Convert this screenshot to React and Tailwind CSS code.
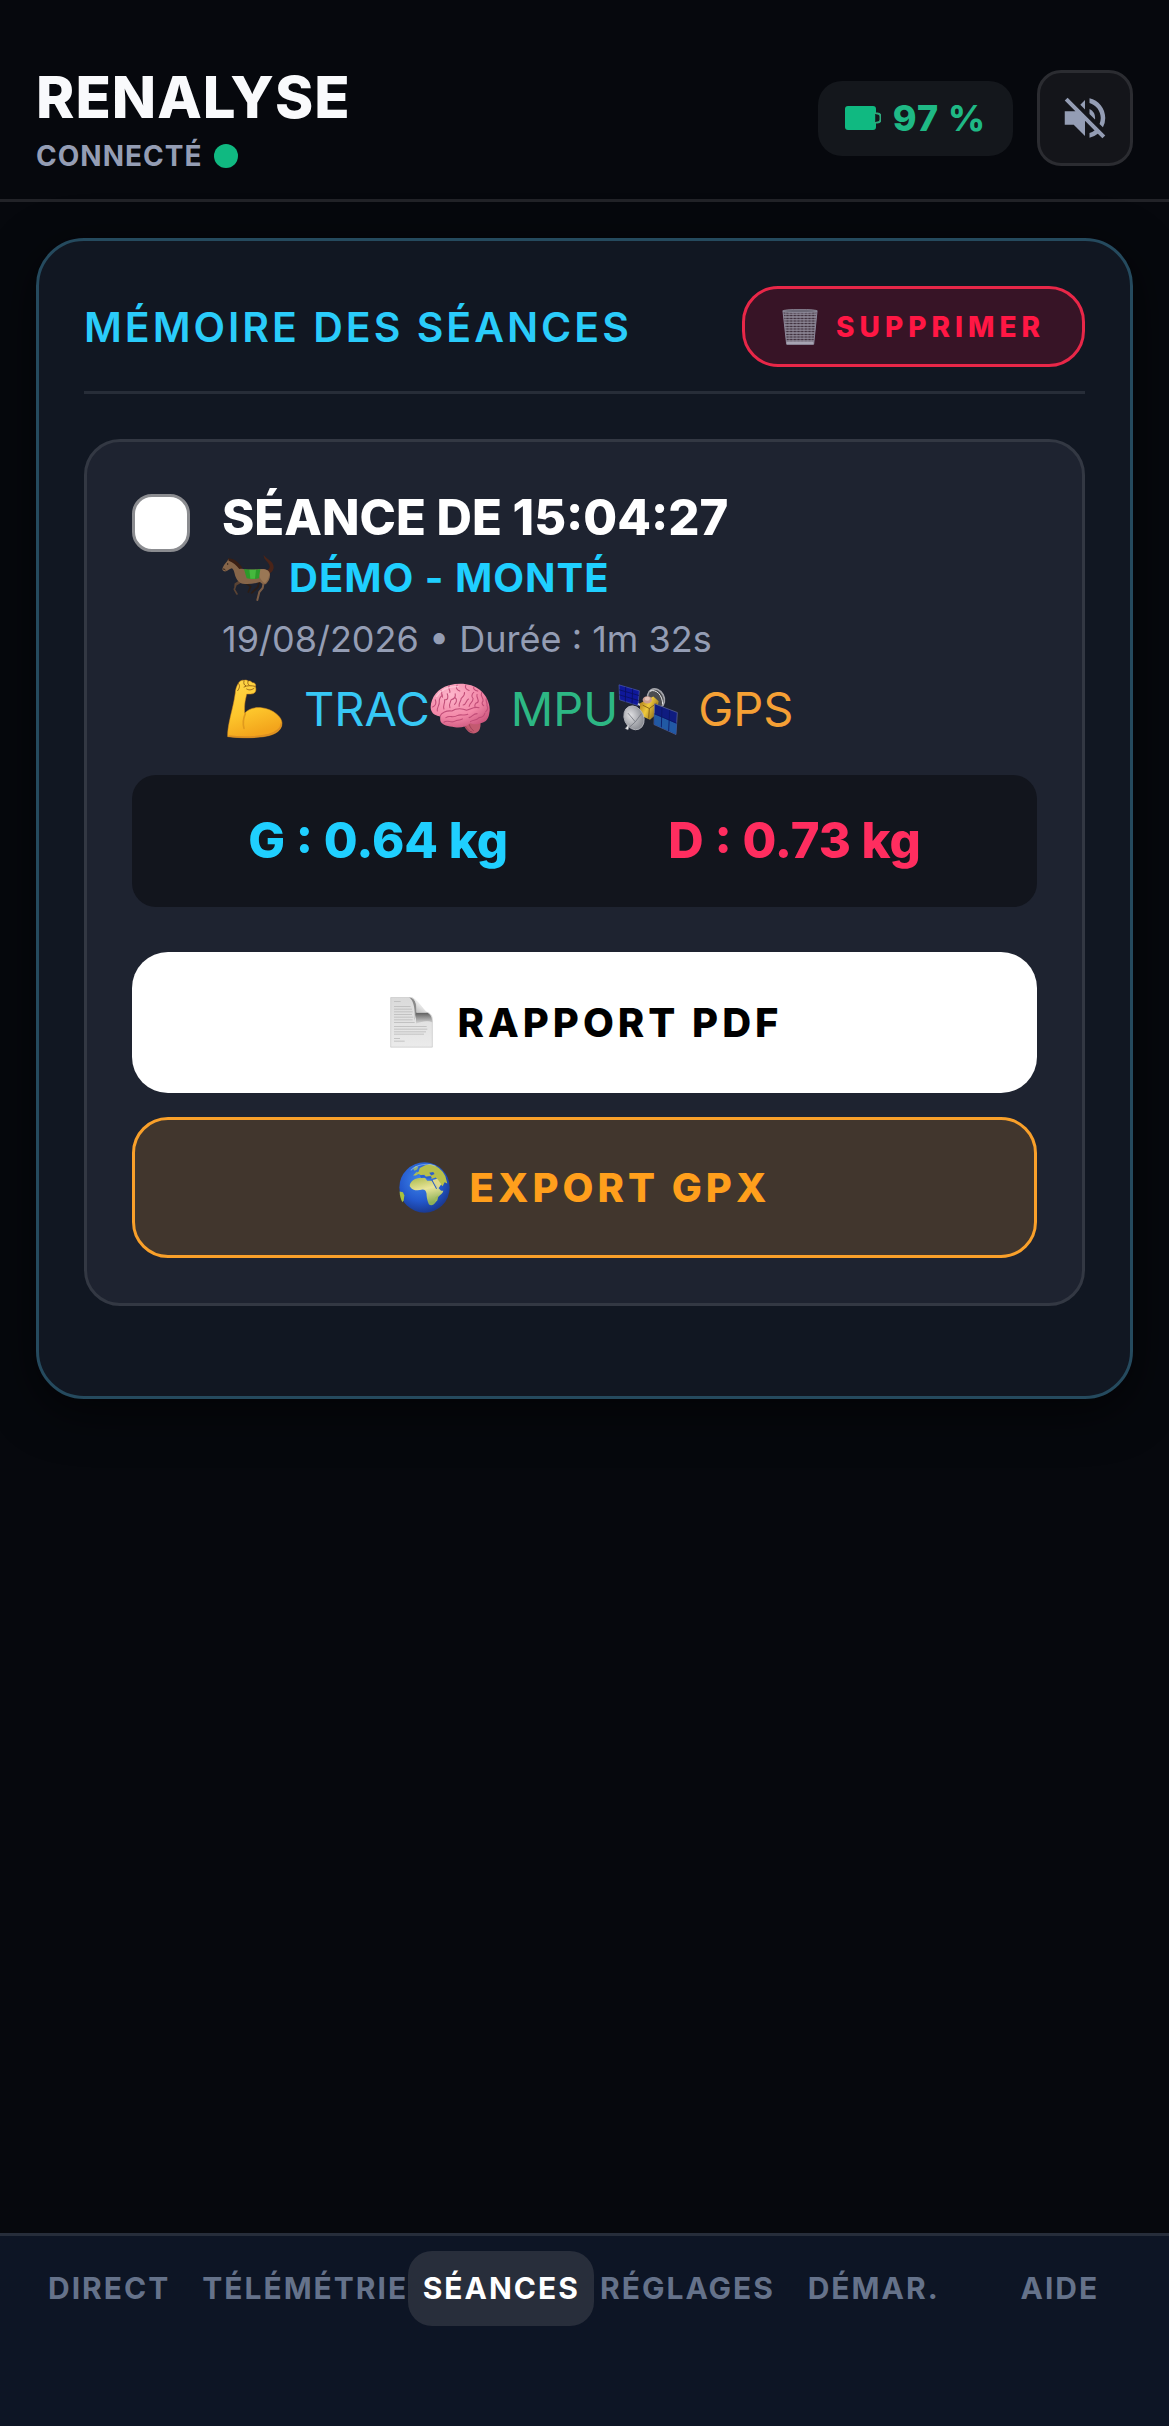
import { useState } from 'react';
import { MdVolumeOff } from 'react-icons/md';

function BatteryIcon() {
  return (
    <svg viewBox="0 0 36 24" className="w-9 h-6 shrink-0" fill="#10b981" aria-hidden="true">
      <rect x="0" y="0" width="31" height="24" rx="3" />
      <path d="M29 7.5h3.5a3 3 0 0 1 3 3v3a3 3 0 0 1-3 3H29" fill="none" stroke="#2fa97d" strokeWidth="2" />
      <path d="M30.8 8v8" stroke="#14181d" strokeWidth="1.2" />
    </svg>
  );
}

function TrashIcon() {
  return (
    <svg viewBox="0 0 108 108" className="w-9 h-9 shrink-0" aria-hidden="true">
      <defs>
        <pattern id="mesh" width="11" height="8" patternUnits="userSpaceOnUse">
          <rect width="11" height="8" fill="#8b8594" />
          <ellipse cx="5.5" cy="4" rx="3.6" ry="2.2" fill="#33222f" />
          <path d="M0 2.2 2 4 0 5.8zM11 2.2 9 4l2 1.8z" fill="#33222f" />
        </pattern>
      </defs>
      <path d="M3 7h102l-10 99H14z" fill="url(#mesh)" stroke="#8b8799" strokeWidth="3" />
      <ellipse cx="54" cy="6" rx="52" ry="5" fill="#6c6876" stroke="#9a98a8" strokeWidth="2" />
      <path d="M14 98h81l-1 8H15z" fill="#a7a4b3" />
    </svg>
  );
}

function HorseIcon() {
  return (
    <svg viewBox="0 0 156 142" className="w-[52px] h-12 shrink-0" aria-hidden="true">
      <g fill="none" strokeLinecap="round" strokeLinejoin="round">
        <path d="M62 80 42 91l-5 14 8 14M54 80l-14 9-1 12" stroke="#5a4333" strokeWidth="5" />
        <path d="M68 84 86 97l-7 16M112 80l-4 18-19 18" stroke="#2c1d15" strokeWidth="5" />
        <path d="m126 80-4 21-10 12-6 24" stroke="#7a5c46" strokeWidth="6" />
      </g>
      <path d="M122 50c18-2 24-8 20-18-4-12-18-16-17-31 6 11 18 14 26 25 9 14 2 30-16 34z" fill="#4a2418" />
      <path d="M1 44c1-7 8-16 15-24l3-7 5 5c12 2 22 12 32 24 10 5 28 4 52 3 22-3 34 2 36 14 1 12-4 22-12 30-6 2-12 0-18-6-16 5-34 7-52 5C48 84 41 72 38 58c-2-8-4-13-8-16-6 1-11 6-18 9-6 1-11-2-11-7z" fill="#866549" />
      <path d="M108 46c20-4 34 2 34 14-1 10-6 20-13 27-10-6-20-20-21-41z" fill="#9a7755" />
      <path d="M18 12c18 0 32 12 44 30l-10 2C42 32 34 24 20 19z" fill="#3a1f14" />
      <path d="M66 44c14 3 32 3 49 0l-4 28c-12 3-26 3-37 0z" fill="#2c9a2a" />
      <path d="M82 46h20l-3 27H85z" fill="#45b83d" />
      <circle cx="17" cy="29" r="2" fill="#1b120d" />
      <path d="M3 44c3 0 6 1 8 4" stroke="#2b1a12" strokeWidth="3" fill="none" />
    </svg>
  );
}

function MuscleIcon() {
  return (
    <svg viewBox="-12 0 186 180" className="w-[62px] h-[60px] shrink-0" aria-hidden="true">
      <defs>
        <linearGradient id="arm" x1="0" y1="0" x2="0.3" y2="1">
          <stop offset="0" stopColor="#ffd84a" />
          <stop offset="0.6" stopColor="#fdc62c" />
          <stop offset="1" stopColor="#f3a51c" />
        </linearGradient>
      </defs>
      <path d="M5 173C4 150 12 118 20 84c4-16 6-30 8-42 0-10 4-20 9-29 4-7 11-11 17-9 5-2 10 0 12 2 6-1 10 1 13 5 7-1 12 5 9 12 3 6 2 16-3 19-6 4-15 3-23 3-2 12-8 26-6 58 8-11 26-19 50-17 36 4 62 28 62 46 0 22-18 34-48 40-30 5-72 6-115 1z" fill="url(#arm)" stroke="#d98d1a" strokeWidth="1.5" />
      <path d="M58 104c-6 14-8 30-4 44" stroke="#e09a1d" strokeWidth="5" fill="none" strokeLinecap="round" />
      <path d="M37 13c6 6 4 14-2 22M54 6c-2 8 0 12 5 14M66 7c-2 6 0 10 4 12M54 24c10-6 24-4 33-2M62 30c6 4 14 4 22-2" stroke="#8f5a12" strokeWidth="2.6" fill="none" strokeLinecap="round" />
      <path d="M8 171c38 5 90 4 120-4 24-7 38-20 38-34" stroke="#dd8f22" strokeWidth="5" fill="none" />
    </svg>
  );
}

function BrainIcon() {
  return (
    <svg viewBox="0 0 184 156" className="w-[61px] h-[52px] shrink-0" aria-hidden="true">
      <defs>
        <radialGradient id="brain" cx="0.35" cy="0.25" r="0.85">
          <stop offset="0" stopColor="#fdb6cb" />
          <stop offset="0.6" stopColor="#f388a8" />
          <stop offset="1" stopColor="#c9527a" />
        </radialGradient>
      </defs>
      <path d="M98 118c8 20 18 34 34 34 16-2 22-16 20-34z" fill="#c35a70" />
      <path d="M104 124c6 14 14 22 24 24M118 124c4 10 8 16 14 20" stroke="#963f55" strokeWidth="2.5" fill="none" />
      <path d="M2 72C3 42 24 14 58 6c36-9 72-3 92 14 22 17 34 48 29 70-2 16-10 28-24 30-12 6-26 4-34 1-12 11-28 14-46 12-20-2-38-6-43-17-2-6-1-12-1-16C12 98 2 88 2 72z" fill="url(#brain)" />
      <g stroke="#c14d78" strokeWidth="3.2" fill="none" strokeLinecap="round" strokeLinejoin="round">
        <path d="M30 100c4-12 20-18 36-16 14-10 34-8 44-2 14-4 22-12 38-8" />
        <path d="M8 72c8-4 12-12 8-22M22 84c-2-12 8-16 6-30 0-8 4-14 10-18M34 22c4 8-2 12 4 20" />
        <path d="M42 78c-4-12 4-16 2-28 10 2 12-8 8-18M58 8c-6 8 4 12 2 20" />
        <path d="M60 74c-4-10 2-18 4-24 8-2 14-8 12-18M76 44c8 6 2 16-2 20M82 6c-6 8 0 16 8 18" />
        <path d="M88 70c-2-12 6-14 6-24 6-6 12-10 10-18M100 66c10 0 8-14 16-18M108 6c-4 8 2 14 10 16" />
        <path d="M118 70c2-12 12-12 12-24-6-4-4-14 2-18M132 12c-2 6 4 10 12 12M142 34c-4 10 8 14 2 24-8 2-10 8-8 14" />
        <path d="M156 28c-6 12 6 14 4 26-4 4-4 10 2 14M170 46c-4 8 4 12 2 22 4 6 2 14-4 18" />
        <path d="M48 104c12-8 22 2 34-6 12-6 20 2 32-4M42 118c10-8 20 2 30-2 14-8 20-2 26-8M118 104c10-2 12-12 24-12M122 116c8-6 18-2 26-12 8 0 16-6 18-14" />
      </g>
      <path d="M20 40C32 20 56 10 84 10" stroke="#ffd3df" strokeWidth="5" fill="none" strokeLinecap="round" opacity="0.7" />
    </svg>
  );
}

function SatelliteIcon() {
  return (
    <svg viewBox="0 0 180 158" className="w-[60px] h-[53px] shrink-0" aria-hidden="true">
      <defs>
        <linearGradient id="gold" x1="0" y1="0" x2="1" y2="0.6">
          <stop offset="0" stopColor="#9c6b16" />
          <stop offset="0.5" stopColor="#f0c93c" />
          <stop offset="1" stopColor="#8a6a1c" />
        </linearGradient>
        <radialGradient id="dish" cx="0.4" cy="0.35" r="0.8">
          <stop offset="0" stopColor="#e0e0e3" />
          <stop offset="1" stopColor="#74777f" />
        </radialGradient>
      </defs>
      <ellipse cx="114" cy="46" rx="24" ry="30" fill="#4c4d50" stroke="#a3a4aa" strokeWidth="5" transform="rotate(-28 114 46)" />
      <path d="M96 24c18-8 38 12 38 40" stroke="#e8e8ea" strokeWidth="3" fill="none" />
      <path d="M3 5l61 18-4 44L5 50z" fill="#0f189a" stroke="#4f5cae" strokeWidth="2" />
      <path d="M23 11l-1 45M44 17l-2 45M4 20l59 17M4 35l58 17" stroke="#0a1060" strokeWidth="2.5" />
      <path d="M60 62l16 8" stroke="#c9c9cc" strokeWidth="6" />
      <path d="M66 60l40-20 16 14-8 40-18 16-30-14z" fill="url(#gold)" />
      <path d="M74 66l20 10-2 30M94 76l22-16" stroke="#7b5512" strokeWidth="2.5" fill="none" />
      <ellipse cx="88" cy="50" rx="14" ry="11" fill="#c99c90" />
      <ellipse cx="88" cy="47" rx="8" ry="6" fill="#e3c3b8" />
      <path d="M110 62l68 26-4 66-66-30z" fill="#0f1c80" stroke="#6670a0" strokeWidth="2" />
      <path d="M109 92l67 30-2 31-65-29z" fill="#2159a4" />
      <path d="M132 71l-2 61M155 80l-3 64M109 92l67 28" stroke="#0b1664" strokeWidth="2.5" />
      <ellipse cx="48" cy="104" rx="29" ry="37" fill="url(#dish)" stroke="#b4b5bb" strokeWidth="2.5" transform="rotate(-24 48 104)" />
      <path d="M30 90l22 26 18-24M52 116l-22 20" stroke="#74777f" strokeWidth="2.5" fill="none" />
      <path d="M34 122l-12 14 8 4z" fill="#eeeeef" stroke="#9a9ca3" strokeWidth="2" />
    </svg>
  );
}

function PageIcon() {
  return (
    <svg viewBox="-12 0 153 152" className="w-[51px] h-[51px] shrink-0" aria-hidden="true">
      <defs>
        <linearGradient id="sheet" x1="0" y1="0" x2="0" y2="1">
          <stop offset="0" stopColor="#dadada" />
          <stop offset="1" stopColor="#ebebeb" />
        </linearGradient>
        <linearGradient id="fold" x1="0.1" y1="1" x2="0.6" y2="0.3">
          <stop offset="0" stopColor="#b5b5b5" />
          <stop offset="1" stopColor="#f6f6f6" />
        </linearGradient>
        <linearGradient id="shade" x1="0" y1="0" x2="0" y2="1">
          <stop offset="0" stopColor="#5c5c5c" />
          <stop offset="1" stopColor="#dcdcdc" />
        </linearGradient>
      </defs>
      <path d="M2 1h58c14 2 20 10 20 26v18h26c14 0 21 10 21 24v81H2z" fill="url(#sheet)" stroke="#c6c6c6" strokeWidth="2" />
      <path d="M12 13h20M12 28h50M12 36h54M12 44h56M12 52h54M12 60h58M12 68h56M12 76h62M12 88h98M12 96h100M12 104h96M12 111h90M12 124h18M12 132h32" stroke="#bababa" strokeWidth="2.4" />
      <path d="M78 46h30c12 2 18 12 19 30-10-6-30-6-49 4z" fill="url(#shade)" />
      <path d="M58 1c16 2 22 12 22 44l-6 24c2-30-2-58-16-68z" fill="#6e6e6e" opacity="0.75" />
      <path d="M64 1c10 2 18 12 46 45H80C80 26 79 8 64 1z" fill="url(#fold)" stroke="#d5d5d5" strokeWidth="1" />
    </svg>
  );
}

function GlobeIcon() {
  return (
    <svg viewBox="0 0 152 152" className="w-[51px] h-[51px] shrink-0" aria-hidden="true">
      <defs>
        <radialGradient id="sea" cx="0.42" cy="0.35" r="0.65">
          <stop offset="0" stopColor="#3f86ea" />
          <stop offset="0.65" stopColor="#2358cc" />
          <stop offset="1" stopColor="#1a3a92" />
        </radialGradient>
        <linearGradient id="land" x1="0" y1="0" x2="0.3" y2="1">
          <stop offset="0" stopColor="#a9b84a" />
          <stop offset="0.5" stopColor="#e9e59a" />
          <stop offset="1" stopColor="#8fb158" />
        </linearGradient>
      </defs>
      <circle cx="76" cy="76" r="75" fill="url(#sea)" />
      <path d="M32 72c0-10 8-18 18-22 10-4 20-4 28-2l6 8 18 0 8 14 12 12c2 4 6 4 10 4-2 10-12 14-16 20-2 10-6 14-12 20-6 4-14 4-16-2-4-10-6-20-6-30-2-8-4-12-12-12-14 4-30 4-38-10z" fill="url(#land)" />
      <path d="M42 40l8-8 8-2 4-12 16-8 14-4c20 4 38 18 46 36l6 22-8-4-6 12-8-8-12-18-12 4-8-6-10 0-4-6-8 2-10-4-8 4z" fill="#b7bf4b" />
      <path d="M62 40l10-2 8 6 14-2 4 6-14 2-8-4-10 2zM90 32l12-2 4 6-10 4z" fill="#2a5fce" />
      <path d="M100 54l14-4 12 16-8 12c-8-6-14-14-18-24z" fill="#dfd98a" />
      <path d="M98 54l14 26" stroke="#2457c4" strokeWidth="3" />
      <path d="M46 26l-4-6 8-8 8 2-4 8zM48 36l4-8 4 6z" fill="#8fb07c" />
      <path d="M108 106l8-6-2 14-6 6z" fill="#9dbb5a" />
      <path d="M2 88l10 2 4 10-2 14-4 6C5 110 2 100 2 88z" fill="#a8c23e" />
      <path d="M36 24C52 8 84 2 108 12" stroke="#a9cdf5" strokeWidth="3" fill="none" opacity="0.55" strokeLinecap="round" />
    </svg>
  );
}

const tabs = ['DIRECT', 'TÉLÉMÉTRIE', 'SÉANCES', 'RÉGLAGES', 'DÉMAR.', 'AIDE'];

function SessionCard({ session, checked, onToggle }) {
  return (
    <article className="rounded-[36px] border-3 border-[#333843] bg-[#1e2330] p-[45px]">
      <div className="flex items-start gap-8">
        <input
          id={session.id}
          type="checkbox"
          checked={checked}
          onChange={onToggle}
          className="appearance-none w-[58px] h-[58px] mt-[7px] shrink-0 rounded-[20px] border-3 border-[#8b8c90] bg-white checked:bg-[#1fcfff]"
        />
        <div className="min-w-0">
          <label htmlFor={session.id} className="block text-[49px] leading-[62px] font-extrabold text-white">
            SÉANCE DE {session.time}
          </label>
          <p className="flex items-center gap-[15px] text-[40px] leading-[58px] font-bold tracking-[1px] text-[#1fcfff]">
            <HorseIcon />
            {session.name}
          </p>
          <p className="mt-2 text-4xl leading-[48px] text-[#949db4]">
            {session.date} • Durée : {session.duration}
          </p>
          <div className="mt-4 flex text-[47px] leading-[60px]">
            <span className="flex items-center gap-5 text-[#37c8f5]"><MuscleIcon />TRAC</span>
            <span className="flex items-center gap-5 text-[#2db784]"><BrainIcon />MPU</span>
            <span className="flex items-center gap-5 text-[#f5a035]"><SatelliteIcon />GPS</span>
          </div>
        </div>
      </div>

      <div className="mt-9 flex justify-around rounded-3xl bg-[#12151d] p-9 text-[49px] leading-[60px] font-extrabold">
        <span className="text-[#1fcfff]">G : {session.left} kg</span>
        <span className="text-[#ff2d5f]">D : {session.right} kg</span>
      </div>

      <div className="mt-[45px] flex flex-col gap-6">
        <button className="flex h-[141px] items-center justify-center gap-5 rounded-[36px] bg-white text-[40px] font-extrabold tracking-[4px] text-black">
          <PageIcon />
          RAPPORT PDF
        </button>
        <button className="flex h-[141px] items-center justify-center gap-5 rounded-[36px] border-3 border-[#f9a02a] bg-[#41362d] text-[40px] font-extrabold tracking-[4px] text-[#ff9f1c]">
          <GlobeIcon />
          EXPORT GPX
        </button>
      </div>
    </article>
  );
}

export default function App() {
  const [tab, setTab] = useState('SÉANCES');
  const [selected, setSelected] = useState(false);

  const session = {
    id: 'seance-1',
    time: '15:04:27',
    name: 'DÉMO - MONTÉ',
    date: '19/08/2026',
    duration: '1m 32s',
    left: '0.64',
    right: '0.73',
  };

  return (
    <div className="flex min-h-screen flex-col bg-[#06080d] font-['Inter',sans-serif]">
      <header className="flex items-center justify-between border-b-3 border-[#222328] px-9 pt-[62px] pb-[25px]">
        <div>
          <h1 className="text-[58px] leading-[70px] font-extrabold tracking-[1px] text-[#f9fafc]">RENALYSE</h1>
          <p className="mt-1.5 flex items-center gap-3 text-[28px] leading-9 font-bold tracking-[1px] text-[#949db4]">
            CONNECTÉ
            <span className="w-6 h-6 rounded-full bg-[#10b981]" />
          </p>
        </div>
        <div className="flex items-center gap-6">
          <div className="flex h-[75px] items-center gap-3 rounded-3xl bg-[#14171c] px-[27px] text-4xl font-extrabold tracking-[1px] text-[#1fb985]">
            <BatteryIcon />
            97 %
          </div>
          <button
            aria-label="Activer le son"
            className="flex w-24 h-24 items-center justify-center rounded-3xl border-3 border-[#2b2c31] bg-[#14151a] text-[#949db4]"
          >
            <MdVolumeOff className="w-[54px] h-[54px]" />
          </button>
        </div>
      </header>

      <main className="flex-1 px-9 pt-9 pb-12">
        <section className="rounded-[48px] border-3 border-[#254a5e] bg-[#111722] px-[45px] pt-[45px] pb-[90px] shadow-[0_12px_48px_rgba(0,0,0,0.6)]">
          <div className="mb-[45px] flex items-center justify-between border-b-3 border-[#272d38] pb-6">
            <h2 className="text-[41px] leading-[60px] font-semibold tracking-[3px] text-[#2accfa]">
              MÉMOIRE DES SÉANCES
            </h2>
            <button className="flex h-[81px] items-center gap-[18px] rounded-[36px] border-3 border-[#e82748] bg-[#371426] px-[37px] text-[28px] font-extrabold tracking-[5px] text-[#ff1744]">
              <TrashIcon />
              SUPPRIMER
            </button>
          </div>
          <SessionCard session={session} checked={selected} onToggle={() => setSelected(!selected)} />
        </section>
      </main>

      <nav className="flex border-t-3 border-[#262d3a] bg-[#0d1525] px-4 pt-[15px] pb-[100px]">
        {tabs.map((t) => (
          <button
            key={t}
            onClick={() => setTab(t)}
            className={
              'h-[75px] flex-1 rounded-3xl text-[30px] font-bold tracking-[2px] ' +
              (t === tab ? 'bg-[#282e3b] text-white' : 'text-[#65728a]')
            }
          >
            {t}
          </button>
        ))}
      </nav>
    </div>
  );
}
